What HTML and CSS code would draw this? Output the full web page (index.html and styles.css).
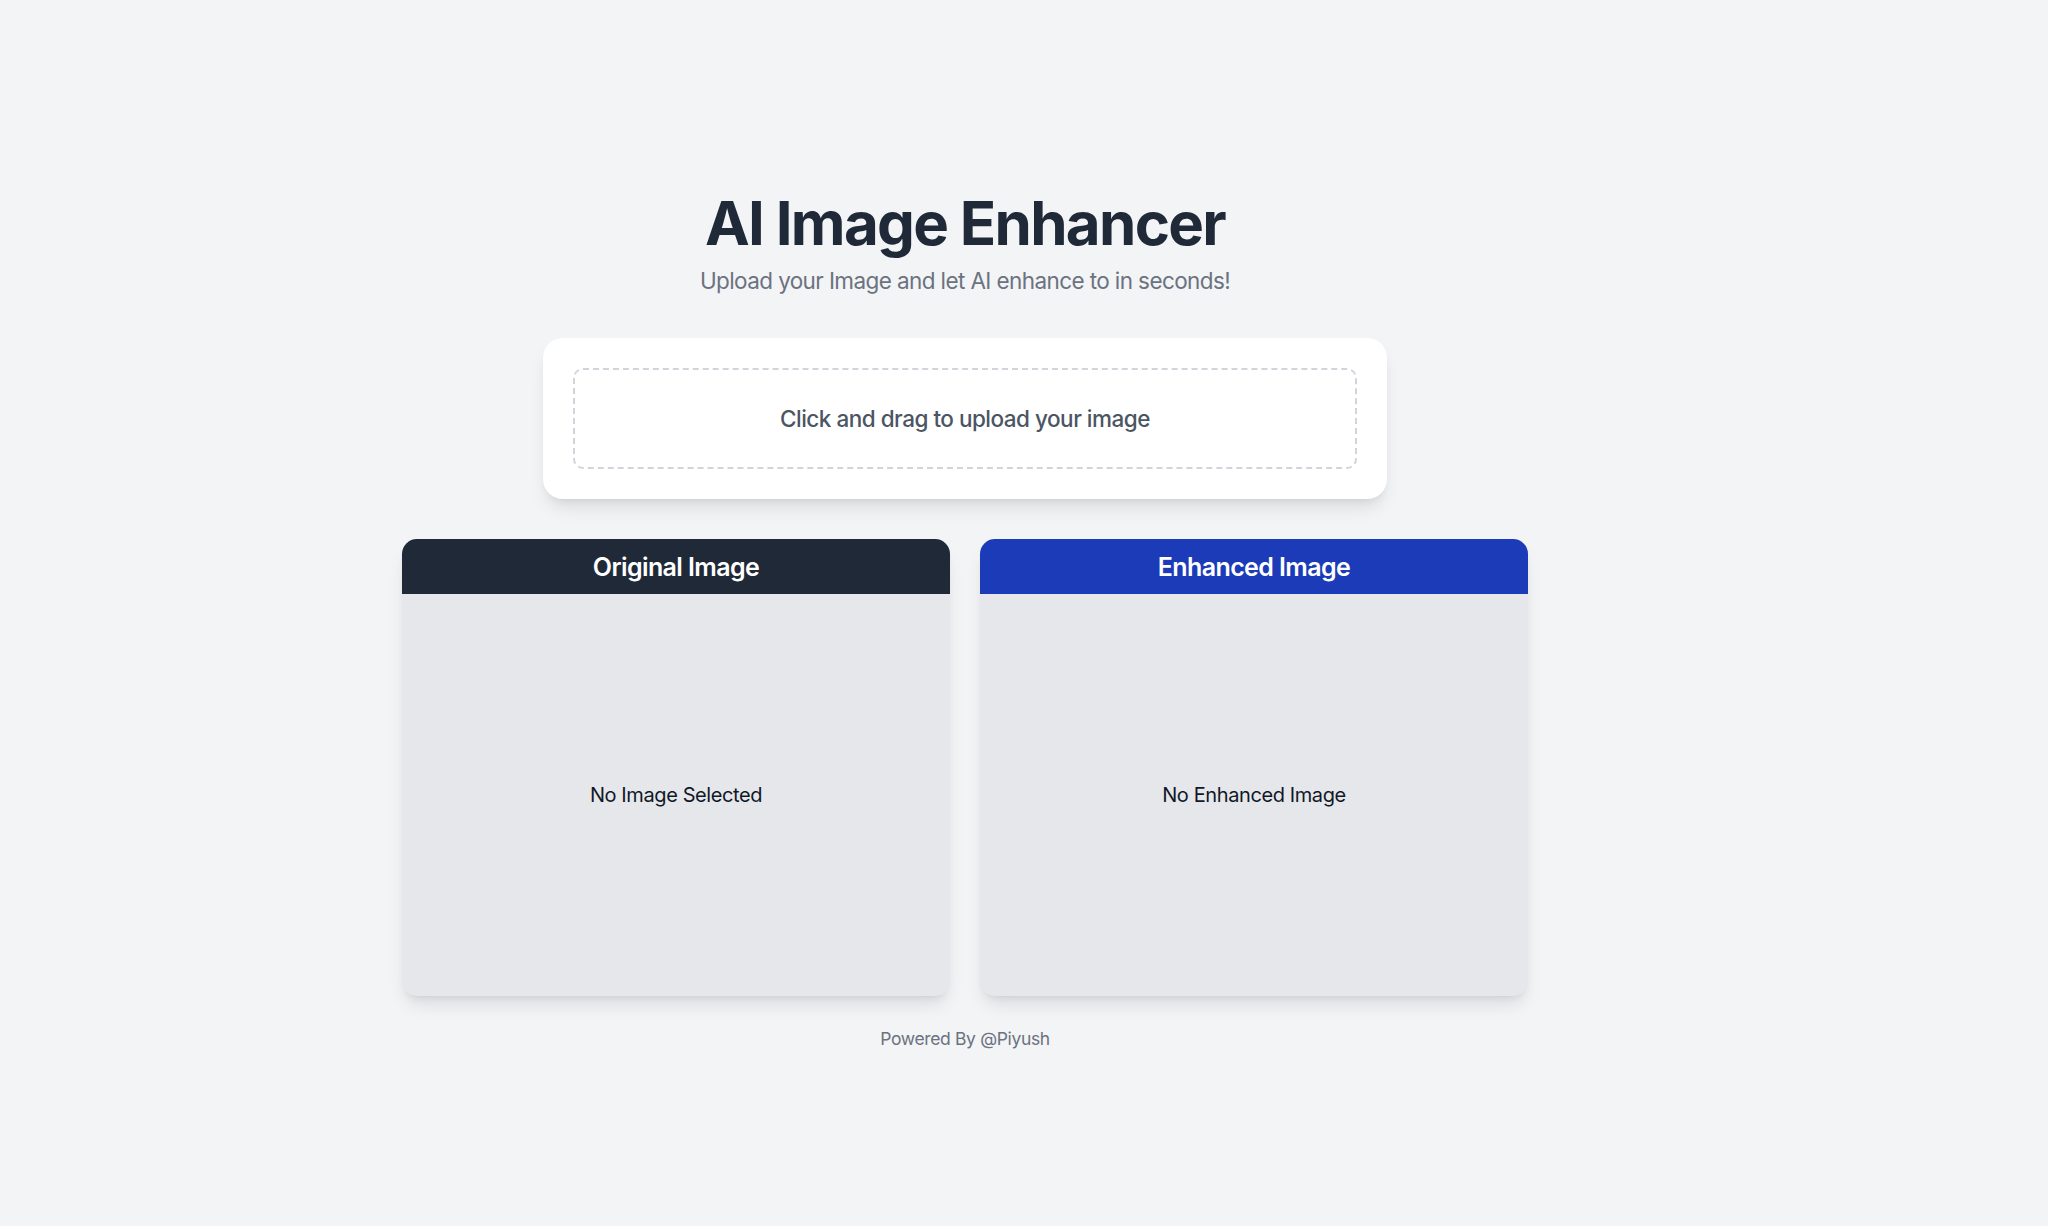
FILE: index.html
```html
<!DOCTYPE html>
<html lang="en">
<head>
<meta charset="utf-8">
<title>AI Image Enhancer</title>
<link rel="stylesheet" href="styles.css">
</head>
<body>
<main class="page">
  <header class="intro">
    <h1 class="title">AI Image Enhancer</h1>
    <p class="subtitle">Upload your Image and let AI enhance to in seconds!</p>
  </header>

  <section class="upload-card">
    <label class="dropzone">
      <span class="dropzone-text">Click and drag to upload your image</span>
    </label>
  </section>

  <section class="previews">
    <div class="preview">
      <h2 class="preview-head preview-head--dark">Original Image</h2>
      <div class="preview-body">No Image Selected</div>
    </div>
    <div class="preview">
      <h2 class="preview-head preview-head--blue">Enhanced Image</h2>
      <div class="preview-body">No Enhanced Image</div>
    </div>
  </section>

  <footer class="footer">Powered By @Piyush</footer>
</main>
</body>
</html>
```

FILE: styles.css
```css
* { box-sizing: border-box; }

html, body {
  margin: 0;
  padding: 0;
  background: #f3f4f6;
  font-family: Inter, "Noto Sans", "Liberation Sans", sans-serif;
}

body { min-height: 1226px; }

.page {
  width: 1930px;
  display: flex;
  flex-direction: column;
  align-items: center;
  padding-top: 193px;
}

.intro { text-align: center; }

.title {
  margin: 0;
  font-size: 60px;
  line-height: 60px;
  font-weight: 700;
  color: #1f2937;
  letter-spacing: -1.7px;
}

.subtitle {
  margin: 10px 0 0;
  font-size: 22.5px;
  line-height: 35px;
  color: #6b7280;
  letter-spacing: -0.6px;
}

.upload-card {
  margin-top: 40px;
  width: 844px;
  background: #ffffff;
  border-radius: 20px;
  padding: 30px;
  box-shadow: 0 12px 18px -4px rgba(0,0,0,0.10), 0 5px 8px -5px rgba(0,0,0,0.10);
}

.dropzone {
  display: flex;
  justify-content: center;
  align-items: center;
  border: 2px dashed #d1d5db;
  border-radius: 10px;
  padding: 31px 30px;
  cursor: pointer;
}

.dropzone-text {
  font-size: 22.5px;
  line-height: 35px;
  font-weight: 500;
  color: #4b5563;
  letter-spacing: -0.5px;
}

.previews {
  margin-top: 40px;
  width: 1126px;
  display: grid;
  grid-template-columns: 1fr 1fr;
  gap: 30px;
}

.preview {
  border-radius: 15px;
  overflow: hidden;
  background: #e5e7eb;
  box-shadow: 0 12px 18px -4px rgba(0,0,0,0.10), 0 5px 8px -5px rgba(0,0,0,0.10);
}

.preview-head {
  margin: 0;
  padding: 11px 0 9px;
  text-align: center;
  font-size: 25px;
  line-height: 35px;
  font-weight: 600;
  color: #ffffff;
  letter-spacing: -0.6px;
}

.preview-head--dark { background: #1f2937; }
.preview-head--blue { background: #1b3bb8; }

.preview-body {
  height: 402px;
  display: flex;
  align-items: center;
  justify-content: center;
  font-size: 20px;
  line-height: 30px;
  color: #111827;
  letter-spacing: -0.4px;
}

.footer {
  margin-top: 30px;
  font-size: 17.5px;
  line-height: 25px;
  color: #6b7280;
  letter-spacing: -0.35px;
}
```
